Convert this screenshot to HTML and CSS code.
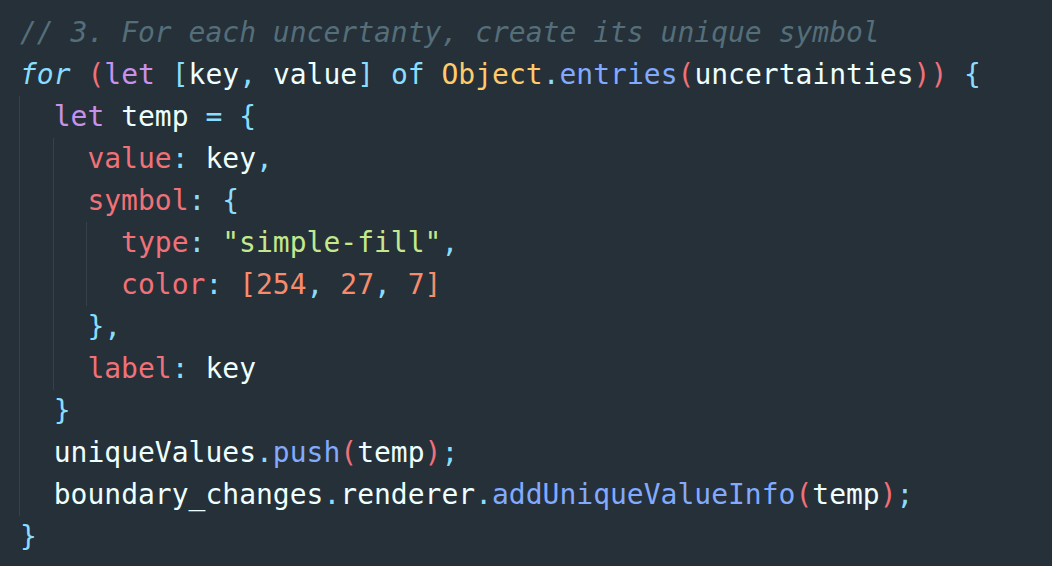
FILE: index.html
```html
<!DOCTYPE html>
<html>
<head>
<meta charset="utf-8">
<link rel="stylesheet" href="styles.css">
</head>
<body>
<div class="editor">
  <div class="line"><span class="cm">// 3. For each uncertanty, create its unique symbol</span></div>
  <div class="line"><span class="kw-i">for</span> <span class="pn">(</span><span class="st">let</span> <span class="op">[</span><span class="vr">key</span><span class="op">,</span> <span class="vr">value</span><span class="op">]</span> <span class="op">of</span> <span class="cl">Object</span><span class="op">.</span><span class="fn">entries</span><span class="pn">(</span><span class="vr">uncertainties</span><span class="pn">))</span> <span class="op">{</span></div>
  <div class="block">
    <div class="line"><span class="st">let</span> <span class="vr">temp</span> <span class="op">=</span> <span class="op">{</span></div>
    <div class="block">
      <div class="line"><span class="pr">value</span><span class="op">:</span> <span class="vr">key</span><span class="op">,</span></div>
      <div class="line"><span class="pr">symbol</span><span class="op">:</span> <span class="op">{</span></div>
      <div class="block">
        <div class="line"><span class="pr">type</span><span class="op">:</span> <span class="sg">"simple-fill"</span><span class="op">,</span></div>
        <div class="line"><span class="pr">color</span><span class="op">:</span> <span class="nm">[254</span><span class="op">,</span> <span class="nm">27</span><span class="op">,</span> <span class="nm">7]</span></div>
      </div>
      <div class="line"><span class="op">},</span></div>
      <div class="line"><span class="pr">label</span><span class="op">:</span> <span class="vr">key</span></div>
    </div>
    <div class="line"><span class="op">}</span></div>
    <div class="line"><span class="vr">uniqueValues</span><span class="op">.</span><span class="fn">push</span><span class="pn">(</span><span class="vr">temp</span><span class="pn">)</span><span class="op">;</span></div>
    <div class="line"><span class="vr">boundary_changes</span><span class="op">.</span><span class="vr">renderer</span><span class="op">.</span><span class="fn">addUniqueValueInfo</span><span class="pn">(</span><span class="vr">temp</span><span class="pn">)</span><span class="op">;</span></div>
  </div>
  <div class="line"><span class="op">}</span></div>
</div>
</body>
</html>
```

FILE: styles.css
```css
html, body {
  margin: 0;
  padding: 0;
  background: #263038;
  overflow: hidden;
}

.editor {
  width: 1052px;
  height: 566px;
  box-sizing: border-box;
  padding: 12px 0 0 19px;
  background: #263038;
  font-family: "DejaVu Sans Mono", "Liberation Mono", monospace;
  font-size: 28px;
  color: #eeffff;
  overflow: hidden;
}

.line {
  height: 42px;
  line-height: 42px;
  white-space: pre;
  padding-left: 1px;
}

.block {
  border-left: 1px solid #35424b;
  padding-left: calc(2ch - 1px);
}

.cm { color: #546e7a; font-style: italic; }
.kw-i { color: #89ddff; font-style: italic; }
.st { color: #c792ea; }
.op { color: #89ddff; }
.pn { color: #f07178; }
.vr { color: #eeffff; }
.cl { color: #ffcb6b; }
.fn { color: #82aaff; }
.pr { color: #f07178; }
.sg { color: #c3e88d; }
.nm { color: #f78c6c; }
```
